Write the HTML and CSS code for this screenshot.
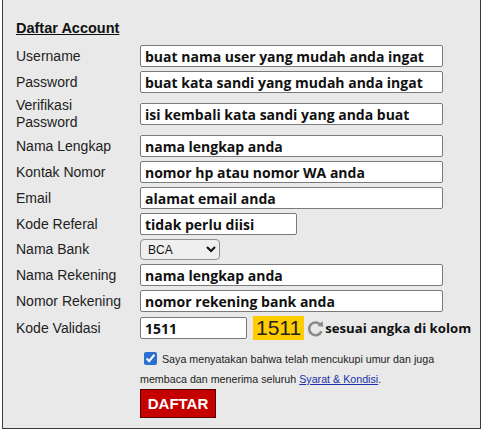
FILE: index.html
```html
<!DOCTYPE html>
<html lang="en">
<head>
    <meta charset="UTF-8">
    <meta name="viewport" content="width=device-width, initial-scale=1.0">
    <title>Daftar Account</title>
    <link rel="stylesheet" href="styles.css">
</head>
<body>
    <div class="register-box">
        <h3 class="title">Daftar Account</h3>
        <form class="reg-form">
            <label for="username">Username</label>
            <input id="username" class="field" value="buat nama user yang mudah anda ingat" />

            <label for="password">Password</label>
            <input id="password" class="field" value="buat kata sandi yang mudah anda ingat" />

            <label for="repassword" class="two-line">Verifikasi<br>Password</label>
            <input id="repassword" class="field" value="isi kembali kata sandi yang anda buat" />

            <label for="fullname">Nama Lengkap</label>
            <input id="fullname" class="field" value="nama lengkap anda" />

            <label for="phone">Kontak Nomor</label>
            <input id="phone" class="field" value="nomor hp atau nomor WA anda" />

            <label for="email">Email</label>
            <input id="email" class="field" value="alamat email anda" />

            <label for="referral">Kode Referal</label>
            <div><input id="referral" class="field short" value="tidak perlu diisi" /></div>

            <label for="bank">Nama Bank</label>
            <div>
                <select id="bank" class="bank-select">
                    <option>BCA</option>
                    <option>BNI</option>
                    <option>BRI</option>
                    <option>MANDIRI</option>
                </select>
            </div>

            <label for="accname">Nama Rekening</label>
            <input id="accname" class="field" value="nama lengkap anda" />

            <label for="accno">Nomor Rekening</label>
            <input id="accno" class="field" value="nomor rekening bank anda" />

            <label for="captcha">Kode Validasi</label>
            <div class="captcha-row">
                <input id="captcha" class="field captcha-input" value="1511" />
                <span class="captcha-code">1511</span>
                <svg class="refresh" width="17" height="17" viewBox="0 0 16 16">
                    <path d="M13.2 5.2A6 6 0 1 0 13.6 10.6" fill="none" stroke="#8a8a8a" stroke-width="2.4"/>
                    <path d="M9.8 5.6 L15.2 6.4 L14.6 0.9 Z" fill="#8a8a8a"/>
                </svg>
                <span class="hint">sesuai angka di kolom</span>
            </div>
        </form>

        <div class="terms">
            <input type="checkbox" id="agree" class="agree" checked />
            <label for="agree">Saya menyatakan bahwa telah mencukupi umur dan juga</label><br>
            membaca dan menerima seluruh <a href="#">Syarat &amp; Kondisi</a>.
        </div>

        <button type="submit" class="btn-daftar">DAFTAR</button>
    </div>
</body>
</html>
```

FILE: styles.css
```css
body {
    margin: 0;
    background-color: #ffffff;
    font-family: "Liberation Sans", Arial, sans-serif;
}

.register-box {
    margin-left: 2px;
    width: 479px;
    height: 429px;
    padding: 19px 0 0 13px;
    box-sizing: border-box;
    background: #e9e9e9;
    border: 1px solid #3a3a3a;
    border-top: none;
    overflow: hidden;
}

.title {
    margin: 0 0 8px 0;
    font-size: 14.5px;
    line-height: 18px;
    color: #111;
    text-decoration: underline;
}

.reg-form {
    display: grid;
    grid-template-columns: 124px 1fr;
    row-gap: 4px;
    align-items: center;
}

.reg-form label {
    font-size: 14px;
    line-height: 17px;
    color: #222;
}

.field {
    display: block;
    width: 303px;
    height: 22px;
    padding: 0 4px;
    box-sizing: border-box;
    border: 1px solid #7a7a7a;
    border-radius: 2px;
    background: #fff;
    font-family: "Open Sans", sans-serif;
    font-weight: bold;
    font-size: 14px;
    color: #111;
}

.field.short {
    width: 157px;
}

.bank-select {
    display: block;
    width: 80px;
    height: 21px;
    padding: 0 3px;
    border: 1px solid #8f8f8f;
    border-radius: 4px;
    background: #efefef;
    font-family: "Liberation Sans", Arial, sans-serif;
    font-size: 12px;
    color: #111;
}

.captcha-row {
    display: flex;
    align-items: center;
    white-space: nowrap;
}

.captcha-input {
    width: 107px;
}

.captcha-code {
    margin-left: 6px;
    padding: 0 3px;
    height: 24px;
    line-height: 24px;
    background: #ffcc00;
    font-size: 21px;
    color: #222;
}

.refresh {
    margin-left: 3px;
}

.hint {
    margin-left: 1px;
    font-family: "Open Sans", sans-serif;
    font-weight: bold;
    font-size: 13.2px;
    color: #111;
}

.terms {
    margin: 9px 0 0 124px;
    font-size: 10.7px;
    line-height: 20px;
    color: #222;
}

.agree {
    width: 13px;
    height: 13px;
    margin: 0 2px 0 4px;
    vertical-align: -2px;
    accent-color: #2b6fcf;
}

.terms a {
    color: #2030a8;
}

.btn-daftar {
    display: block;
    margin-left: 124px;
    width: 76px;
    height: 29px;
    background: #c40000;
    border: 1px solid #5a0000;
    color: white;
    font-family: "Liberation Sans", Arial, sans-serif;
    font-weight: bold;
    font-size: 15px;
}
```
